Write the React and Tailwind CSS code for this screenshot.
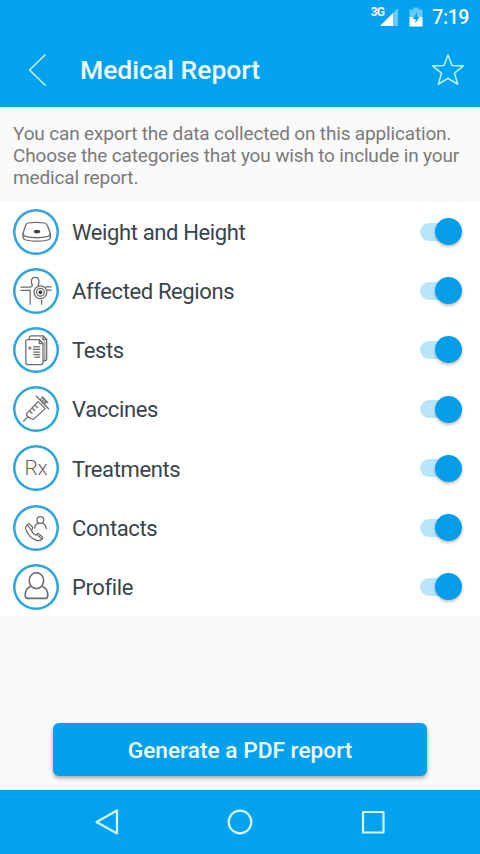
import { useState } from "react";

function ScaleIcon() {
  return (
    <g>
      <path d="M15 14 Q23 12.6 31.5 14 Q33.5 14.3 34.4 16.5 L37.2 24 Q37.6 26.5 35.3 27.3 Q24 30.2 12.3 27.3 Q9.6 26.5 10.1 24 L12.8 16 Q13.4 14.3 15 14 Z" />
      <path d="M10 24.5 V28 Q10 30.4 12.8 31 Q24 33.4 34.8 31 Q37.5 30.4 37.5 28 V24.5" />
      <ellipse cx="24" cy="22.6" rx="2.6" ry="1.3" fill="#444" stroke="#444" />
    </g>
  );
}

function RegionsIcon() {
  return (
    <g>
      <path d="M8 19 H17.5 Q19.2 18.8 19.4 17.2 Q18.4 15.6 18.4 13.2 Q18.6 9.3 22.2 9.3 Q25.8 9.3 26 13.2 Q26 15.4 25.2 17.4 M8 22.4 H17.2 V36.3 M28.6 32 V36.3 M32.5 18.8 H38 M34.5 22.2 H38" />
      <circle cx="27.4" cy="24.3" r="6.4" />
      <circle cx="27.4" cy="24.3" r="3.9" />
      <circle cx="27.4" cy="24.3" r="1.4" fill="#444" stroke="#444" />
    </g>
  );
}

function TestsIcon() {
  return (
    <g>
      <path d="M16.3 12.5 V10.8 Q16.3 8.8 18.3 8.8 H30.2 L33.7 12.3 V31.8 Q33.7 33.8 31.7 33.8 H30.2 M30.2 9 V12.3 H33.7" />
      <path d="M14.8 12.7 H26.3 L30 16.5 V35.5 Q30 37.5 28 37.5 H14.8 Q12.8 37.5 12.8 35.5 V14.7 Q12.8 12.7 14.8 12.7 Z M26.3 12.9 V16.5 H29.9" />
      <path d="M20.6 19.8 H26.8 M20.6 22.4 H26.8 M20.6 25 H26.8 M20.6 27.6 H26.8 M22 30.2 H26.8 M15.6 21 H18 M16.8 19.8 V22.2" />
      <path d="M28.3 10.8 L31.9 14.5 V33.5" strokeWidth="0.9" />
    </g>
  );
}

function SyringeIcon() {
  return (
    <g>
      <path d="M10.6 35 L15.2 30.6 M13.6 27.6 L25 15.6 L32.2 22.6 L20.4 33.4 Q18 33.2 16 31.6 Q13 29.6 13.6 27.6 Z" />
      <path d="M16.6 25 L19 27.3 M19.2 22.2 L21.6 24.5 M22 19.2 L24.4 21.6" />
      <path d="M23.4 10.2 L35.6 22.8 M26.8 14 L30 11.8 L33.8 15.5 L31.4 18.8 M28.6 16 L31.8 12.8 M30 17.4 L33 14.6 M29 10.8 L34.8 16.5" />
    </g>
  );
}

function ContactsIcon() {
  return (
    <g>
      <path d="M14.2 20 Q12 22 13.2 25.5 Q16.2 32.4 23 35.2 Q27 36.6 29 34.4 Q30.4 33 29.2 31.8 L26 28.9 Q24.8 28 23.8 29.2 L22.8 30.2 Q19.6 28.8 18.2 25.3 L19.4 24 Q20.2 23 19.4 22 L17 19.3 Q15.6 18.2 14.2 20 Z" />
      <path d="M14.6 20.2 L18.2 24.8 M24.2 29.6 L28.4 33.8" />
      <circle cx="27.4" cy="14.9" r="3.4" />
      <path d="M21.6 23 Q22.2 19 25.4 18.4 M29.4 18.4 Q32.6 19.2 33.4 23.6" />
    </g>
  );
}

function ProfileIcon() {
  return (
    <g strokeWidth="1.6">
      <ellipse cx="23.4" cy="16.6" rx="7.2" ry="8" />
      <path d="M17.8 22.6 Q12.2 24.4 12.2 31.3 Q12.2 34.4 14.7 34.4 H32.2 Q34.8 34.4 34.8 31.3 Q34.8 24.4 29 22.6" />
    </g>
  );
}

const CATEGORIES = [
  { id: "weight", label: "Weight and Height", Icon: ScaleIcon },
  { id: "regions", label: "Affected Regions", Icon: RegionsIcon },
  { id: "tests", label: "Tests", Icon: TestsIcon },
  { id: "vaccines", label: "Vaccines", Icon: SyringeIcon },
  { id: "treatments", label: "Treatments", Icon: null },
  { id: "contacts", label: "Contacts", Icon: ContactsIcon },
  { id: "profile", label: "Profile", Icon: ProfileIcon },
];

function Toggle({ on, label, onChange }) {
  return (
    <button
      role="switch"
      aria-checked={on}
      aria-label={label}
      onClick={onChange}
      className={`flex h-[18px] w-[42px] items-center rounded-full ${on ? "justify-end bg-[#b9e5fb]" : "justify-start bg-gray-300"}`}
    >
      <span className={`size-[27px] shrink-0 rounded-full shadow-[0_2px_3px_rgba(0,0,0,0.25)] ${on ? "bg-[#059de8]" : "bg-gray-50"}`} />
    </button>
  );
}

function CategoryRow({ category, on, onChange }) {
  const { label, Icon } = category;
  return (
    <li className="flex h-[59.2px] items-center pr-[18px] pl-[13px]">
      <span className="flex size-[46px] items-center justify-center rounded-full shadow-[inset_0_0_0_2.5px_#2ba6dc]">
        {Icon ? (
          <svg viewBox="0 0 46 46" className="size-[46px] shrink-0" fill="none" stroke="#6c6c70" strokeWidth="1.25" strokeLinecap="round" strokeLinejoin="round">
            <Icon />
          </svg>
        ) : (
          <span className="pt-px text-[21px] leading-none font-light tracking-[-0.4px] text-[#666]">Rx</span>
        )}
      </span>
      <span className="ml-[13px] flex-1 pt-[2.4px] text-[22px] leading-none tracking-[-0.38px] text-[#37444b]">{label}</span>
      <Toggle on={on} label={label} onChange={onChange} />
    </li>
  );
}

function StatusBar() {
  return (
    <div className="flex h-[33px] items-center justify-end pr-[11px] text-white">
      <span className="mb-[10px] text-[12px] leading-none font-bold tracking-[-0.8px]">3G</span>
      <svg viewBox="0 0 20 20" className="-ml-[5px] h-5 w-5">
        <path d="M19 1 V19 H1 Z" fill="#66caf7" />
        <path d="M14 6 V19 H1 Z" fill="#fff" />
      </svg>
      <svg viewBox="0 0 14 20" className="ml-[10px] h-5 w-[14px]">
        <path d="M4.5 0.5 H9.5 V2.5 H13.5 V10 H0.5 V2.5 H4.5 Z" fill="#66caf7" />
        <path d="M0.5 10 H13.5 V19.5 H0.5 Z" fill="#fff" />
        <path d="M8 5.5 L3.5 12 H6.5 V16 L10.5 9.8 H8 Z" fill="#02a2ee" />
      </svg>
      <span className="ml-[9px] pt-[2px] text-[19.5px] leading-none font-medium tracking-[-0.4px]">7:19</span>
    </div>
  );
}

export default function App() {
  const [selected, setSelected] = useState(() => CATEGORIES.map((c) => c.id));

  function toggle(id) {
    setSelected((s) => (s.includes(id) ? s.filter((x) => x !== id) : [...s, id]));
  }

  return (
    <div className="flex h-[854px] w-[480px] flex-col overflow-hidden bg-[#fafafa] font-[Roboto,sans-serif]">
      <header className="h-[107px] shrink-0 bg-[#02a2ee]">
        <StatusBar />
        <div className="flex h-[74px] items-center pr-[15px] pl-7">
          <button aria-label="Back">
            <svg viewBox="0 0 20 34" className="h-[34px] w-5" fill="none" stroke="#c5f3ff" strokeWidth="1.5">
              <path d="M17.5 1.5 L1.5 17 L17.5 32.5" />
            </svg>
          </button>
          <h1 className="ml-8 flex-1 pt-px text-[26.5px] leading-none font-medium text-[#f2fdff]">Medical Report</h1>
          <button aria-label="Favourite">
            <svg viewBox="0 0 34 34" className="h-[34px] w-[34px]" fill="none" stroke="#b5f0ff" strokeWidth="1.6" strokeLinejoin="round">
              <path d="M17 2 L21 12.5 L32.3 12.9 L23.5 20.2 L26.7 31.3 L17 25.2 L7.3 31.3 L10.5 20.2 L1.7 12.9 L13 12.5 Z" />
            </svg>
          </button>
        </div>
      </header>

      <p className="h-[95px] shrink-0 px-[13px] pt-4 text-[19px] leading-[22px] tracking-[-0.16px] whitespace-nowrap text-[#7a7a7a]">
        You can export the data collected on this application.
        <br />
        Choose the categories that you wish to include in your
        <br />
        medical report.
      </p>

      <ul className="shrink-0 bg-white">
        {CATEGORIES.map((c) => (
          <CategoryRow key={c.id} category={c} on={selected.includes(c.id)} onChange={() => toggle(c.id)} />
        ))}
      </ul>

      <div className="flex flex-1 items-end justify-center pb-[14px]">
        <button className="h-[53px] w-[374px] rounded-md bg-[#03a1ec] pt-[4px] text-[22.7px] font-medium text-[#f2fdff] shadow-[0_2px_4px_rgba(0,0,0,0.35)]">
          Generate a PDF report
        </button>
      </div>

      <nav className="flex h-16 shrink-0 items-center justify-center gap-[105px] bg-[#02a2ee]">
        <svg viewBox="0 0 28 28" className="size-7" fill="none" stroke="#d5faff" strokeWidth="2.2" strokeLinejoin="round">
          <path d="M24 2.5 V25.5 L3.5 14 Z" />
        </svg>
        <svg viewBox="0 0 28 28" className="size-7" fill="none" stroke="#d5faff" strokeWidth="2.2">
          <circle cx="14" cy="14" r="11.3" />
        </svg>
        <svg viewBox="0 0 28 28" className="size-7" fill="none" stroke="#d5faff" strokeWidth="2.2" strokeLinejoin="round">
          <rect x="4" y="4" width="20.5" height="20.5" />
        </svg>
      </nav>
    </div>
  );
}
